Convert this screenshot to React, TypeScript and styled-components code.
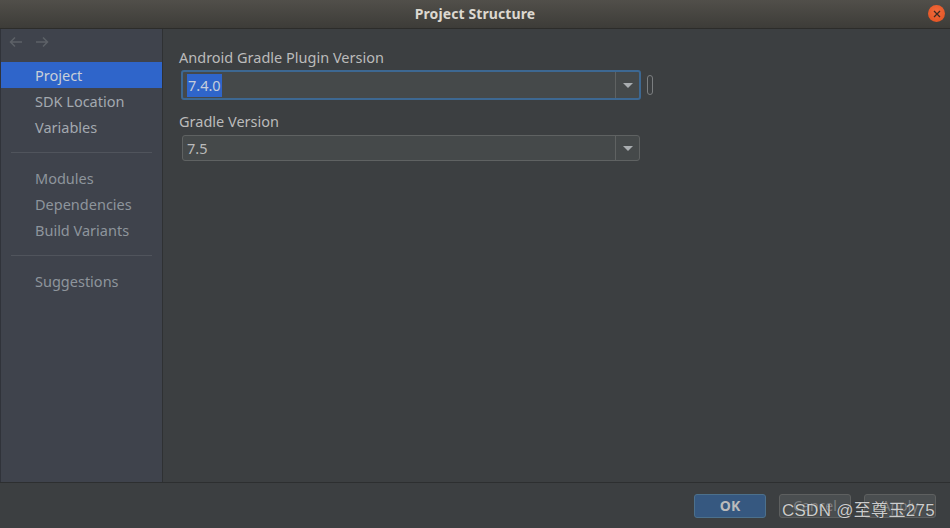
import styled, { createGlobalStyle } from 'styled-components';

const Global = createGlobalStyle`
  html, body {
    margin: 0;
    padding: 0;
    background: #3c3f41;
  }
  * {
    box-sizing: border-box;
  }
`;

const groups = [
  ['Project', 'SDK Location', 'Variables'],
  ['Modules', 'Dependencies', 'Build Variants'],
  ['Suggestions'],
];

function App() {
  return (
    <Window>
      <Global />
      <TitleBar>
        <span>Project Structure</span>
        <CloseButton>
          <svg width='8' height='8' viewBox='0 0 8 8'>
            <path d='M1 1L7 7M7 1L1 7' stroke='#3b2a22' strokeWidth='1.3' />
          </svg>
        </CloseButton>
      </TitleBar>
      <Body>
        <Sidebar>
          <NavArrows>
            <svg width='14' height='12' viewBox='0 0 14 12'>
              <path d='M13 6H2M6 1.5L1.5 6L6 10.5' stroke='#5d6167' strokeWidth='1.5' fill='none' />
            </svg>
            <svg width='14' height='12' viewBox='0 0 14 12'>
              <path d='M1 6H12M8 1.5L12.5 6L8 10.5' stroke='#5d6167' strokeWidth='1.5' fill='none' />
            </svg>
          </NavArrows>
          {groups.map((group, gi) => (
            <div key={gi}>
              {gi > 0 && <Separator />}
              {group.map((item) => (
                <NavItem key={item} $selected={item === 'Project'} $dim={gi > 0}>
                  {item}
                </NavItem>
              ))}
            </div>
          ))}
        </Sidebar>
        <Content>
          <Field>
            <Label>Android Gradle Plugin Version</Label>
            <ComboRow>
              <Combo $focused>
                <Value>
                  <Selected>7.4.0</Selected>
                </Value>
                <ArrowBox>
                  <Triangle />
                </ArrowBox>
              </Combo>
              <Pill />
            </ComboRow>
          </Field>
          <Field>
            <Label>Gradle Version</Label>
            <ComboRow>
              <Combo>
                <Value>7.5</Value>
                <ArrowBox>
                  <Triangle />
                </ArrowBox>
              </Combo>
            </ComboRow>
          </Field>
        </Content>
      </Body>
      <Footer>
        <Button $primary>OK</Button>
        <Button>Cancel</Button>
        <Button $disabled>Apply</Button>
        <Watermark>CSDN @至尊玉275</Watermark>
      </Footer>
    </Window>
  );
}
export default App;

const Window = styled.div`
  width: 950px;
  height: 528px;
  display: flex;
  flex-direction: column;
  background: #3c3f41;
  font-family: 'Noto Sans', 'Open Sans', sans-serif;
  overflow: hidden;
`;

const TitleBar = styled.div`
  height: 29px;
  flex-shrink: 0;
  position: relative;
  display: flex;
  align-items: center;
  justify-content: center;
  background: linear-gradient(#514f4a, #3d3c38);
  border-bottom: 1px solid #2c2c2a;
  > span {
    font-size: 14px;
    font-weight: 700;
    color: #dcd8d0;
    letter-spacing: 0.1px;
    margin-top: -2px;
  }
`;

const CloseButton = styled.div`
  position: absolute;
  right: 5px;
  top: 5px;
  width: 17px;
  height: 17px;
  border-radius: 50%;
  background: radial-gradient(circle at 50% 40%, #f26a3c, #e0501f);
  display: flex;
  align-items: center;
  justify-content: center;
`;

const Body = styled.div`
  flex: 1;
  display: flex;
  min-height: 0;
`;

const Sidebar = styled.div`
  width: 163px;
  flex-shrink: 0;
  background: #3f434c;
  border-left: 1px solid #30333a;
  border-right: 1px solid #2f3133;
`;

const NavArrows = styled.div`
  height: 26px;
  display: flex;
  align-items: center;
  gap: 12px;
  padding-left: 8px;
  margin-bottom: 7px;
`;

const NavItem = styled.div<{ $selected?: boolean; $dim?: boolean }>`
  height: 26px;
  line-height: 26px;
  padding-left: 34px;
  font-size: 14.5px;
  background: ${(p) => (p.$selected ? '#2f65ca' : 'transparent')};
  color: ${(p) => (p.$selected ? '#c9cfd8' : p.$dim ? '#8e959c' : '#a3a9b0')};
`;

const Separator = styled.div`
  height: 1px;
  margin: 12px 10px 12px 10px;
  background: #50545c;
`;

const Content = styled.div`
  flex: 1;
  padding: 18px 0 0 16px;
  display: flex;
  flex-direction: column;
  gap: 11px;
`;

const Field = styled.div`
  display: flex;
  flex-direction: column;
  gap: 3px;
`;

const Label = styled.div`
  font-size: 14.5px;
  color: #bbbbbb;
  line-height: 20px;
`;

const ComboRow = styled.div`
  display: flex;
  align-items: center;
  gap: 6px;
`;

const Combo = styled.div<{ $focused?: boolean }>`
  width: ${(p) => (p.$focused ? '460px' : '458px')};
  height: ${(p) => (p.$focused ? '30px' : '26px')};
  margin: ${(p) => (p.$focused ? '0 0 0 2px' : '1px 0 0 3px')};
  display: flex;
  background: #45494a;
  border: ${(p) => (p.$focused ? '2px solid #3d6892' : '1px solid #5f6262')};
  border-radius: 3px;
`;

const Value = styled.div`
  flex: 1;
  display: flex;
  align-items: center;
  padding-left: 4px;
  font-size: 14.5px;
  color: #bbbbbb;
`;

const Selected = styled.span`
  background: #2f65ca;
  color: #c5cedb;
  padding: 1px 1px 2px 1px;
  line-height: 20px;
`;

const ArrowBox = styled.div`
  width: 24px;
  border-left: 1px solid #5f6262;
  display: flex;
  align-items: center;
  justify-content: center;
`;

const Triangle = styled.div`
  width: 0;
  height: 0;
  border-left: 5px solid transparent;
  border-right: 5px solid transparent;
  border-top: 5px solid #a9adb0;
  margin-top: 1px;
`;

const Pill = styled.div`
  width: 6px;
  height: 20px;
  border: 1px solid #7b7e80;
  border-radius: 3px;
`;

const Footer = styled.div`
  height: 46px;
  flex-shrink: 0;
  border-top: 1px solid #2d2f30;
  position: relative;
  display: flex;
  align-items: center;
  justify-content: flex-end;
  gap: 13px;
  padding: 0 14px 0 0;
`;

const Button = styled.div<{ $primary?: boolean; $disabled?: boolean }>`
  width: 72px;
  height: 24px;
  display: flex;
  align-items: center;
  justify-content: center;
  border-radius: 3px;
  font-size: 14px;
  font-weight: ${(p) => (p.$primary ? 700 : 400)};
  background: ${(p) => (p.$primary ? '#365880' : '#4a4e50')};
  border: 1px solid ${(p) => (p.$primary ? '#4c708c' : '#5e6060')};
  color: ${(p) => (p.$primary ? '#bbbbbb' : '#7d8083')};
`;

const Watermark = styled.div`
  position: absolute;
  right: 15px;
  top: 13px;
  font-size: 17px;
  color: rgba(235, 235, 235, 0.85);
  text-shadow: 0 0 1px rgba(0, 0, 0, 0.6);
  font-family: 'Liberation Sans', 'Noto Sans CJK SC', sans-serif;
  letter-spacing: 0.3px;
`;
